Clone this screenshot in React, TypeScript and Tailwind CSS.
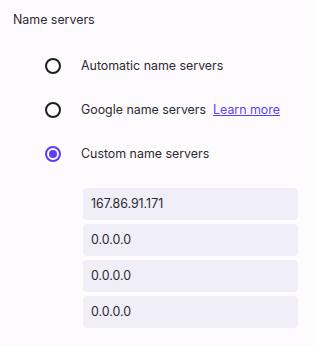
import React from "react";

function Radio({ checked }: { checked?: boolean }) {
  return checked ? (
    <span className="flex h-[16px] w-[16px] items-center justify-center rounded-full border-2 border-[#5a3ff5]">
      <span className="h-[8px] w-[8px] rounded-full bg-[#5a3ff5]" />
    </span>
  ) : (
    <span className="h-[16px] w-[16px] rounded-full border-2 border-[#1e1e22]" />
  );
}

export default function App() {
  const inputs = ["167.86.91.171", "0.0.0.0", "0.0.0.0", "0.0.0.0"];
  return (
    <div
      className="h-[346px] w-[316px] bg-[#fefbfe] text-[12.4px] text-[#2a2a30]"
      style={{ fontFamily: "Inter, 'Noto Sans', sans-serif" }}
    >
      <div className="px-[13px] pt-[12px] leading-[16px]">Name servers</div>
      <div className="mt-[30px] flex flex-col gap-[28px] pl-[45px]">
        <div className="flex h-[16px] items-center">
          <Radio />
          <span className="ml-[20px]">Automatic name servers</span>
        </div>
        <div className="flex h-[16px] items-center">
          <Radio />
          <span className="ml-[20px]">Google name servers</span>
          <a href="#" className="ml-[7px] text-[#5a3ff5] underline">Learn more</a>
        </div>
        <div className="flex h-[16px] items-center">
          <Radio checked />
          <span className="ml-[20px]">Custom name servers</span>
        </div>
      </div>
      <div className="ml-[83px] mt-[26px] flex w-[215px] flex-col gap-[4px]">
        {inputs.map((v, i) => (
          <div key={i} className="flex h-[32px] items-center rounded-[4px] bg-[#f0eff8] px-[8px]">
            {v}
          </div>
        ))}
      </div>
    </div>
  );
}
